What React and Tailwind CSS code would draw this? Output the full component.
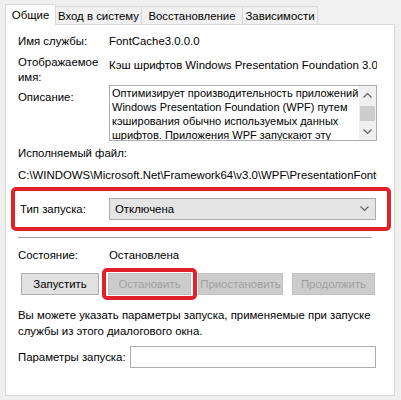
import React from 'react';

const Chevron = ({ up = false, className = '' }) => (
  <svg width="9" height="6" viewBox="0 0 9 6" className={className}>
    <path
      d={up ? 'M0.5 5.5 L4.5 1.5 L8.5 5.5' : 'M0.5 0.5 L4.5 4.5 L8.5 0.5'}
      fill="none"
      stroke="#606060"
      strokeWidth="1.2"
    />
  </svg>
);

const Tab = ({ label, active, w }) =>
  active ? (
    <div className={`h-[21px] bg-white border border-b-0 border-[#d9d9d9] flex items-center justify-center relative z-10 -mb-px pb-px ${w}`}>
      {label}
    </div>
  ) : (
    <div className={`h-[18px] bg-[#f0f0f0] border border-l-0 border-b-0 border-[#d9d9d9] flex items-center justify-center ${w}`}>
      {label}
    </div>
  );

const Button = ({ label, disabled, w }) => (
  <div
    className={`h-[22px] flex items-center justify-center border whitespace-nowrap ${
      disabled ? 'bg-[#cccccc] border-[#bfbfbf] text-[#a0a0a0]' : 'bg-[#e1e1e1] border-[#adadad]'
    } ${w}`}
  >
    {label}
  </div>
);

export default function App() {
  return (
    <div
      className="w-[401px] h-[400px] bg-[#f0f0f0] pl-[5px] pt-[4px] text-[11.4px] leading-[16px] text-black overflow-hidden whitespace-nowrap"
      style={{ fontFamily: '"Liberation Sans", Arial, sans-serif' }}
    >
      {/* tabs */}
      <div className="flex items-end">
        <Tab label="Общие" active w="w-[51px]" />
        <Tab label="Вход в систему" w="w-[86px]" />
        <Tab label="Восстановление" w="w-[101px]" />
        <Tab label="Зависимости" w="w-[75px]" />
      </div>

      {/* panel */}
      <div className="w-[390px] h-[372px] bg-white border border-[#d9d9d9] pl-[12px] flex flex-col">
        <div className="flex mt-[8px]">
          <div className="w-[91px]">Имя службы:</div>
          <div>FontCache3.0.0.0</div>
        </div>

        <div className="flex mt-[6px] leading-[15px]">
          <div className="w-[91px] shrink-0">
            Отображаемое
            <br />
            имя:
          </div>
          <div className="mt-[3px] w-[268px] overflow-hidden">
            Кэш шрифтов Windows Presentation Foundation 3.0.0.0
          </div>
        </div>

        <div className="flex">
          <div className="w-[91px] shrink-0 pt-[4px]">Описание:</div>
          <div className="w-[268px] h-[56px] border border-[#abadb3] flex overflow-hidden">
            <div className="flex-1 pl-[2px] text-[11px] leading-[14px] overflow-hidden">
              Оптимизирует производительность приложений
              <br />
              Windows Presentation Foundation (WPF) путем
              <br />
              кэширования обычно используемых данных
              <br />
              шрифтов. Приложения WPF запускают эту
            </div>
            <div className="w-[17px] shrink-0 bg-[#f0f0f0] flex flex-col items-center">
              <div className="h-[17px] flex items-center justify-center">
                <Chevron up />
              </div>
              <div className="w-[15px] h-[15px] bg-[#cdcdcd] mt-[3px]" />
              <div className="flex-1" />
              <div className="h-[17px] flex items-center justify-center">
                <Chevron />
              </div>
            </div>
          </div>
        </div>

        <div className="mt-[4px]">Исполняемый файл:</div>
        <div className="mt-[6px] w-[359px] overflow-hidden">
          C:\WINDOWS\Microsoft.Net\Framework64\v3.0\WPF\PresentationFontCache.exe
        </div>

        {/* startup type, highlighted */}
        <div className="mt-[4px] -ml-[7px] w-[380px] h-[44px] border-4 border-[#e3212b] rounded-[5px] flex items-center pl-[5px]">
          <div className="w-[89px]">Тип запуска:</div>
          <div className="w-[267px] h-[22px] bg-[#e5e5e5] border border-[#acacac] flex items-center justify-between pl-[5px] pr-[6px]">
            <span>Отключена</span>
            <Chevron />
          </div>
        </div>

        <div className="mt-[6px] w-[354px] h-px bg-[#a0a0a0]" />

        <div className="flex mt-[9px]">
          <div className="w-[91px]">Состояние:</div>
          <div>Остановлена</div>
        </div>

        <div className="relative flex mt-[10px] ml-[3px]">
          <Button label="Запустить" w="w-[78px]" />
          <div className="ml-[9px]">
            <Button label="Остановить" disabled w="w-[83px]" />
          </div>
          <div className="ml-[7px]">
            <Button label="Приостановить" disabled w="w-[85px]" />
          </div>
          <div className="ml-[9px]">
            <Button label="Продолжить" disabled w="w-[83px]" />
          </div>
          <div className="absolute left-[81px] top-[-5px] w-[95px] h-[32px] border-4 border-[#e3212b] rounded-[5px]" />
        </div>

        <div className="mt-[12px]">
          Вы можете указать параметры запуска, применяемые при запуске
          <br />
          службы из этого диалогового окна.
        </div>

        <div className="flex items-center mt-[7px]">
          <div className="w-[112px]">Параметры запуска:</div>
          <div className="w-[246px] h-[22px] border border-[#abadb3]" />
        </div>
      </div>
    </div>
  );
}
